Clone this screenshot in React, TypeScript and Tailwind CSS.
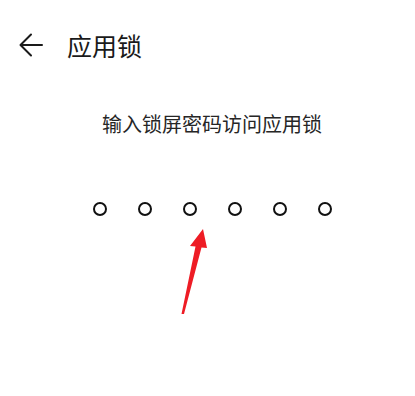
export default function App() {
  const dots = [0, 1, 2, 3, 4, 5];
  return (
    <div
      className="relative w-[415px] h-[396px] bg-white overflow-hidden"
      style={{ fontFamily: '"Noto Sans CJK SC", "Noto Sans", sans-serif' }}
    >
      <div className="flex items-center h-[46px] mt-[22px] pl-[19px]">
        <svg width="24" height="24" viewBox="0 0 24 24" fill="none" stroke="#1a1a1a" strokeWidth="2" strokeLinecap="round" strokeLinejoin="round">
          <path d="M23 12H2" />
          <path d="M12 1.5L1.5 12L12 22.5" />
        </svg>
        <h1 className="ml-[24px] text-[25px] leading-none text-[#1a1a1a]">应用锁</h1>
      </div>

      <div className="flex flex-col items-center pl-[9px]">
        <p className="mt-[46px] text-[20px] leading-none text-[#262626]">输入锁屏密码访问应用锁</p>
        <div className="flex gap-[31px] mt-[68px]">
          {dots.map((d) => (
            <div key={d} className="w-[14px] h-[14px] rounded-full border-[2.5px] border-[#111]" />
          ))}
        </div>
      </div>

      <svg className="absolute left-0 top-0" width="415" height="396" viewBox="0 0 415 396">
        <path d="M203 229 L190 246 L195.5 246.5 L181.5 314 L184 314 L201.5 247.5 L207 248 Z" fill="#ee1c25" />
      </svg>
    </div>
  );
}
